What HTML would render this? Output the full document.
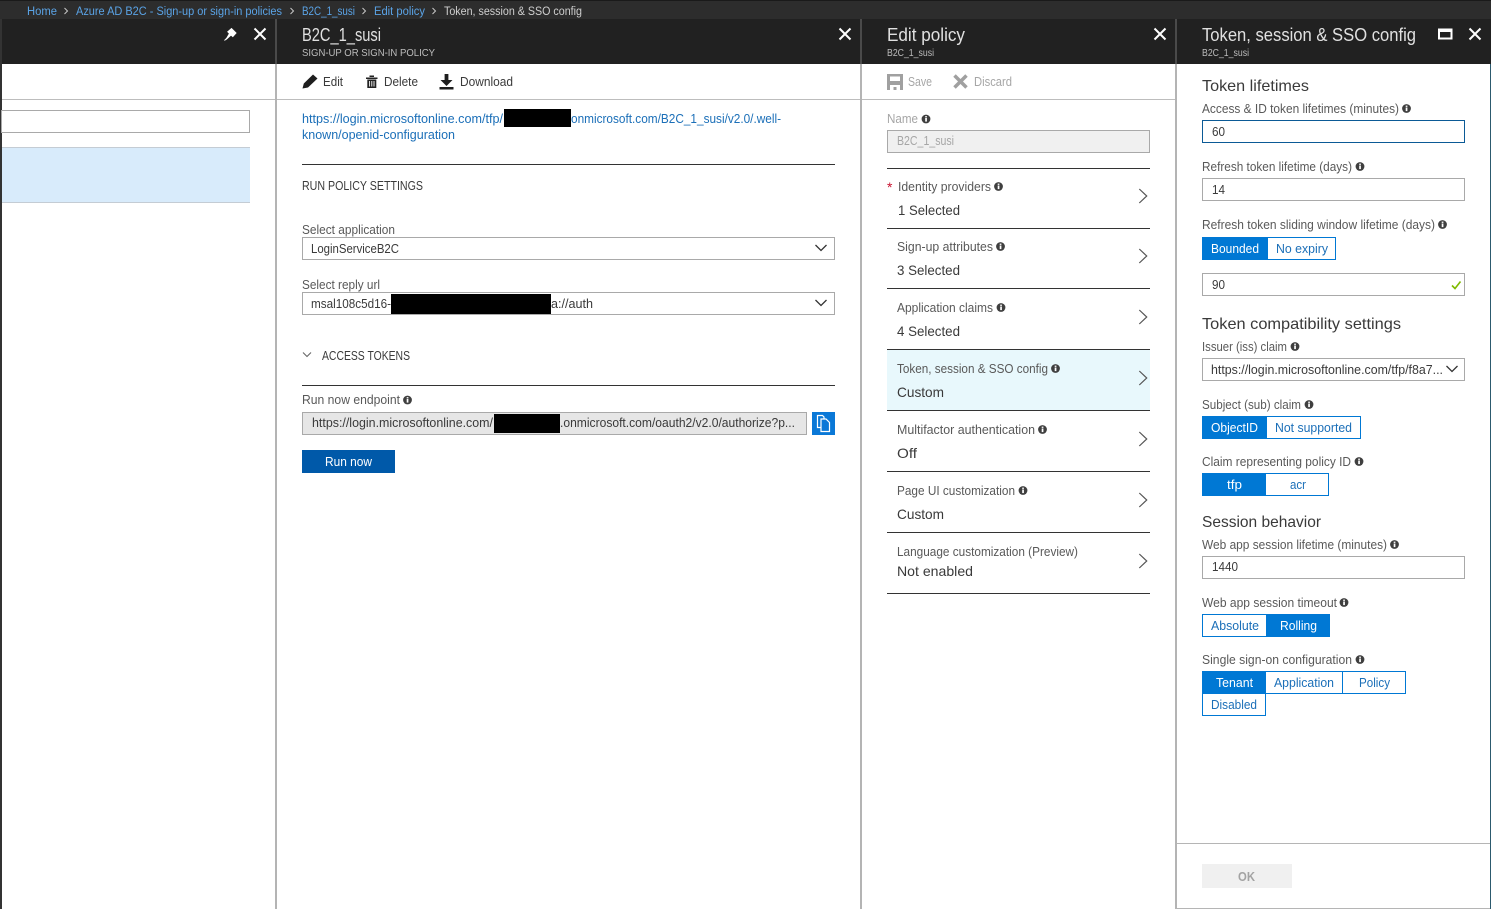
<!DOCTYPE html>
<html><head><meta charset="utf-8"><title>Token, session &amp; SSO config</title>
<style>
html,body{margin:0;padding:0;background:#fff;overflow:hidden}
svg{display:block;position:absolute;left:0;top:0}
text{font-family:"Liberation Sans",sans-serif;font-size:12.5px;fill:#595959}
.l{fill:#1b6fb8}.d{fill:#3a3a3a}.w{fill:#fff}.g{fill:#a6a6a6}
.t{font-size:18px;fill:#e0e0e0}.s{font-size:10px;fill:#bdbdbd}
.bc{font-size:11.5px;fill:#5aa3e6}
.h{font-size:16px;fill:#3a3a3a}.v{font-size:14px;fill:#3a3a3a}
.box{fill:#fff;stroke:#a9a9a9;stroke-width:1}
.tb{fill:#fff;stroke:#0078d4;stroke-width:1}
.on{fill:#0078d4}
.x{fill:none;stroke:#fff;stroke-width:2}
</style></head><body>
<svg width="1491" height="909" viewBox="0 0 1491 909" xmlns="http://www.w3.org/2000/svg">
<defs>
<g id="i"><circle cx="0" cy="0" r="4.4" fill="#3f3f3f"/><rect x="-.8" y="-1" width="1.7" height="3.6" fill="#fff"/><rect x="-.8" y="-2.9" width="1.7" height="1.3" fill="#fff"/></g>
<path id="chev" d="M-3.7 -7 L3.7 0 L-3.7 7" fill="none" stroke="#555" stroke-width="1.2"/>
<path id="dd" d="M-5.5 -3 L0 2.5 L5.5 -3" fill="none" stroke="#333" stroke-width="1.3"/>
<path id="cl" d="M-5.5 -5.5 L5.5 5.5 M5.5 -5.5 L-5.5 5.5" class="x"/>
<path id="bcc" d="M-1.5 -3 L1.5 0 L-1.5 3" fill="none" stroke="#c8c8c8" stroke-width="1"/>
</defs>

<!-- top bars -->
<rect x="0" y="0" width="1491" height="19" fill="#2d2d2d"/>
<rect x="0" y="0" width="1491" height="1" fill="#1a1a1a"/>
<rect x="0" y="19" width="1491" height="45" fill="#212121"/>
<text class="bc" x="27" y="15" textLength="30" lengthAdjust="spacingAndGlyphs">Home</text>
<use href="#bcc" x="66" y="11"/>
<text class="bc" x="76" y="15" textLength="206" lengthAdjust="spacingAndGlyphs">Azure AD B2C - Sign-up or sign-in policies</text>
<use href="#bcc" x="292" y="11"/>
<text class="bc" x="302" y="15" textLength="53" lengthAdjust="spacingAndGlyphs">B2C_1_susi</text>
<use href="#bcc" x="364" y="11"/>
<text class="bc" x="374" y="15" textLength="51" lengthAdjust="spacingAndGlyphs">Edit policy</text>
<use href="#bcc" x="434" y="11"/>
<text class="bc" style="fill:#cfcfcf" x="444" y="15" textLength="138" lengthAdjust="spacingAndGlyphs">Token, session &amp; SSO config</text>

<!-- panel frames -->
<rect x="0" y="19" width="2" height="890" fill="#333"/>
<rect x="275" y="19" width="2" height="45" fill="#4a4a4a"/>
<rect x="860" y="19" width="2" height="45" fill="#4a4a4a"/>
<rect x="1175" y="19" width="2" height="45" fill="#4a4a4a"/>
<rect x="275" y="64" width="2" height="845" fill="#b4b4b4"/>
<rect x="860" y="64" width="2" height="845" fill="#b4b4b4"/>
<rect x="1175" y="64" width="2" height="845" fill="#b4b4b4"/>
<rect x="1490" y="64" width="1" height="845" fill="#2c5a6e"/>
<rect x="2" y="99" width="273" height="1" fill="#bdbdbd"/>
<rect x="277" y="99" width="583" height="1" fill="#bdbdbd"/>
<rect x="862" y="99" width="313" height="1" fill="#bdbdbd"/>
<rect x="1177" y="843" width="313" height="1" fill="#b5b5b5"/>
<rect x="1177" y="908" width="313" height="1" fill="#b5b5b5"/>

<!-- header content -->
<path d="M226 39.5 L229.5 33.5 L227.8 31.8 L231.5 28.5 L236 33 L232.8 36.6 L231 35 Z M229.5 35.5 L224.5 40.5" fill="#fff" stroke="#fff" stroke-width="1"/>
<use href="#cl" x="260" y="34"/>
<use href="#cl" x="845" y="34"/>
<use href="#cl" x="1160" y="34"/>
<use href="#cl" x="1475" y="34"/>
<rect x="1439" y="29.5" width="12.5" height="9" fill="none" stroke="#fff" stroke-width="2"/><rect x="1438" y="29" width="14" height="3" fill="#fff"/>
<text class="t" x="302" y="41" textLength="79" lengthAdjust="spacingAndGlyphs">B2C_1_susi</text>
<text class="s" x="302" y="56" textLength="133" lengthAdjust="spacingAndGlyphs">SIGN-UP OR SIGN-IN POLICY</text>
<text class="t" x="887" y="41" textLength="78" lengthAdjust="spacingAndGlyphs">Edit policy</text>
<text class="s" x="887" y="56" textLength="47" lengthAdjust="spacingAndGlyphs">B2C_1_susi</text>
<text class="t" x="1202" y="41" textLength="214" lengthAdjust="spacingAndGlyphs">Token, session &amp; SSO config</text>
<text class="s" x="1202" y="56" textLength="47" lengthAdjust="spacingAndGlyphs">B2C_1_susi</text>

<!-- left panel -->
<rect x="1.5" y="110.5" width="248" height="22" class="box"/>
<rect x="2" y="148" width="248" height="55" fill="#d8ebfb"/>
<rect x="2" y="147" width="248" height="1" fill="#c4ccd4"/>
<rect x="2" y="202" width="248" height="1" fill="#c4ccd4"/>

<!-- panel 2 toolbar -->
<path d="M302.5 88.5 L303.8 83.5 L313 74.5 L317.5 78.5 L308 87.5 Z" fill="#1e1e1e"/>
<text class="d" x="323" y="86" textLength="20" lengthAdjust="spacingAndGlyphs">Edit</text>
<path d="M366 77.5 H377.5 V79 H366 Z M369.5 75.5 H374 V77 H369.5 Z M367.3 79.5 H376.3 V88 H367.3 Z" fill="#222"/>
<path d="M369.6 81 V86.5 M371.8 81 V86.5 M374 81 V86.5" stroke="#fff" stroke-width=".9"/>
<text class="d" x="384" y="86" textLength="34" lengthAdjust="spacingAndGlyphs">Delete</text>
<path d="M444.6 74 H448.4 V80 H452.5 L446.5 86 L440.5 80 H444.6 Z" fill="#1e1e1e"/><rect x="439.5" y="87" width="14" height="2.5" fill="#1e1e1e"/>
<text class="d" x="460" y="86" textLength="53" lengthAdjust="spacingAndGlyphs">Download</text>

<!-- panel 2 body -->
<text class="l" x="302" y="123" textLength="201" lengthAdjust="spacingAndGlyphs">https://login.microsoftonline.com/tfp/</text>
<rect x="504" y="109" width="67" height="18" fill="#000"/>
<text class="l" x="571" y="123" textLength="210" lengthAdjust="spacingAndGlyphs">onmicrosoft.com/B2C_1_susi/v2.0/.well-</text>
<text class="l" x="302" y="139" textLength="153" lengthAdjust="spacingAndGlyphs">known/openid-configuration</text>
<rect x="302" y="164" width="533" height="1" fill="#333"/>
<text class="d" x="302" y="190" textLength="121" lengthAdjust="spacingAndGlyphs">RUN POLICY SETTINGS</text>
<text x="302" y="234" textLength="93" lengthAdjust="spacingAndGlyphs">Select application</text>
<rect x="302.5" y="237.5" width="532" height="22" class="box"/>
<text class="d" x="311" y="253" textLength="88" lengthAdjust="spacingAndGlyphs">LoginServiceB2C</text>
<use href="#dd" x="821" y="248"/>
<text x="302" y="289" textLength="78" lengthAdjust="spacingAndGlyphs">Select reply url</text>
<rect x="302.5" y="292.5" width="532" height="22" class="box"/>
<text class="d" x="311" y="308" textLength="80" lengthAdjust="spacingAndGlyphs">msal108c5d16-</text>
<rect x="391" y="294" width="160" height="20" fill="#000"/>
<text class="d" x="551" y="308" textLength="42" lengthAdjust="spacingAndGlyphs">a://auth</text>
<use href="#dd" x="821" y="303"/>
<path d="M303 352.5 L307 356.5 L311 352.5" fill="none" stroke="#666" stroke-width="1.1"/>
<text class="d" x="322" y="360" textLength="88" lengthAdjust="spacingAndGlyphs">ACCESS TOKENS</text>
<rect x="302" y="385" width="533" height="1" fill="#333"/>
<text x="302" y="404" textLength="98" lengthAdjust="spacingAndGlyphs">Run now endpoint</text>
<use href="#i" x="407.500" y="400"/>
<rect x="302.500" y="412.500" width="504" height="22" fill="#e6e6e6" stroke="#a9a9a9"/>
<text class="d" x="312" y="427" textLength="181" lengthAdjust="spacingAndGlyphs">https://login.microsoftonline.com/</text>
<rect x="494" y="414" width="66" height="19" fill="#000"/>
<text class="d" x="560" y="427" textLength="235" lengthAdjust="spacingAndGlyphs">.onmicrosoft.com/oauth2/v2.0/authorize?p...</text>
<rect x="812" y="412" width="23" height="23" fill="#0a78d7"/>
<path d="M817.500 415.500 H822.500 L824 417 V427.500 H817.500 Z" fill="none" stroke="#fff" stroke-width="1.2"/>
<path d="M821 419 H826 L829.500 422.500 V431.500 H821 Z" fill="#0a78d7" stroke="#fff" stroke-width="1.2"/>
<rect x="302" y="450" width="93" height="23" fill="#0059a9"/>
<text class="w" x="325" y="466" textLength="47" lengthAdjust="spacingAndGlyphs">Run now</text>

<!-- panel 3 toolbar -->
<path d="M887 74 H903 V90 H900 V85 H890 V90 H887 Z M890 76.500 V81 H900 V76.500 Z M893.500 87 H896.500 V90 H893.500 Z" fill="#a0a0a0" fill-rule="evenodd"/>
<text class="g" x="908" y="86" textLength="24" lengthAdjust="spacingAndGlyphs">Save</text>
<path d="M954.500 75.500 L966.500 87.500 M966.500 75.500 L954.500 87.500" stroke="#a0a0a0" stroke-width="3.500" fill="none"/>
<text class="g" x="974" y="86" textLength="38" lengthAdjust="spacingAndGlyphs">Discard</text>

<!-- panel 3 body -->
<text class="g" x="887" y="123" textLength="31" lengthAdjust="spacingAndGlyphs">Name</text>
<use href="#i" x="926" y="119"/>
<rect x="887.500" y="130.500" width="262" height="22" fill="#f0f0f0" stroke="#a9a9a9"/>
<text class="g" x="897" y="145" textLength="57" lengthAdjust="spacingAndGlyphs">B2C_1_susi</text>
<rect x="887" y="168" width="263" height="1" fill="#333"/>

<text style="fill:#c8102e;font-size:14px" x="887" y="192">*</text>
<text x="898" y="191" textLength="93" lengthAdjust="spacingAndGlyphs">Identity providers</text>
<use href="#i" x="998.500" y="186.500"/>
<text class="v" x="898" y="215" textLength="62" lengthAdjust="spacingAndGlyphs">1 Selected</text>
<use href="#chev" x="1143" y="196"/>
<rect x="887" y="228" width="263" height="1" fill="#333"/>

<text x="897" y="251" textLength="96" lengthAdjust="spacingAndGlyphs">Sign-up attributes</text>
<use href="#i" x="1000.500" y="246.500"/>
<text class="v" x="897" y="275" textLength="63" lengthAdjust="spacingAndGlyphs">3 Selected</text>
<use href="#chev" x="1143" y="256"/>
<rect x="887" y="288" width="263" height="1" fill="#333"/>

<text x="897" y="312" textLength="96" lengthAdjust="spacingAndGlyphs">Application claims</text>
<use href="#i" x="1001" y="307.500"/>
<text class="v" x="897" y="336" textLength="63" lengthAdjust="spacingAndGlyphs">4 Selected</text>
<use href="#chev" x="1143" y="317"/>
<rect x="887" y="349" width="263" height="1" fill="#333"/>

<rect x="887" y="350" width="263" height="60" fill="#e8f8fc"/>
<text x="897" y="373" textLength="151" lengthAdjust="spacingAndGlyphs">Token, session &amp; SSO config</text>
<use href="#i" x="1055.500" y="368.500"/>
<text class="v" x="897" y="397" textLength="47" lengthAdjust="spacingAndGlyphs">Custom</text>
<use href="#chev" x="1143" y="378"/>
<rect x="887" y="410" width="263" height="1" fill="#333"/>

<text x="897" y="434" textLength="138" lengthAdjust="spacingAndGlyphs">Multifactor authentication</text>
<use href="#i" x="1042.500" y="429.500"/>
<text class="v" x="897" y="458" textLength="20" lengthAdjust="spacingAndGlyphs">Off</text>
<use href="#chev" x="1143" y="439"/>
<rect x="887" y="471" width="263" height="1" fill="#333"/>

<text x="897" y="495" textLength="118" lengthAdjust="spacingAndGlyphs">Page UI customization</text>
<use href="#i" x="1023" y="490.500"/>
<text class="v" x="897" y="519" textLength="47" lengthAdjust="spacingAndGlyphs">Custom</text>
<use href="#chev" x="1143" y="500"/>
<rect x="887" y="532" width="263" height="1" fill="#333"/>

<text x="897" y="556" textLength="181" lengthAdjust="spacingAndGlyphs">Language customization (Preview)</text>
<text class="v" x="897" y="576" textLength="76" lengthAdjust="spacingAndGlyphs">Not enabled</text>
<use href="#chev" x="1143" y="561"/>
<rect x="887" y="593" width="263" height="1" fill="#333"/>

<!-- panel 4 body -->
<text class="h" x="1202" y="91" textLength="107" lengthAdjust="spacingAndGlyphs">Token lifetimes</text>
<text x="1202" y="113" textLength="197" lengthAdjust="spacingAndGlyphs">Access &amp; ID token lifetimes (minutes)</text>
<use href="#i" x="1406.500" y="108.500"/>
<rect x="1202.500" y="120.500" width="262" height="22" fill="#fff" stroke="#0b5a96"/>
<text class="d" x="1212" y="136" textLength="13" lengthAdjust="spacingAndGlyphs">60</text>

<text x="1202" y="171" textLength="150" lengthAdjust="spacingAndGlyphs">Refresh token lifetime (days)</text>
<use href="#i" x="1360" y="166.500"/>
<rect x="1202.500" y="178.500" width="262" height="22" class="box"/>
<text class="d" x="1212" y="194" textLength="13" lengthAdjust="spacingAndGlyphs">14</text>

<text x="1202" y="229" textLength="233" lengthAdjust="spacingAndGlyphs">Refresh token sliding window lifetime (days)</text>
<use href="#i" x="1442.500" y="224.500"/>
<rect x="1267.500" y="237.500" width="68" height="22" class="tb"/>
<rect x="1202" y="237" width="65" height="23" class="on"/>
<text class="w" x="1211" y="253" textLength="48" lengthAdjust="spacingAndGlyphs">Bounded</text>
<text class="l" x="1276" y="253" textLength="52" lengthAdjust="spacingAndGlyphs">No expiry</text>

<rect x="1202.500" y="273.500" width="262" height="22" class="box"/>
<text class="d" x="1212" y="289" textLength="13" lengthAdjust="spacingAndGlyphs">90</text>
<path d="M1452 285.500 L1455 288.500 L1460.500 281.500" fill="none" stroke="#7fba00" stroke-width="1.6"/>

<text class="h" x="1202" y="329" textLength="199" lengthAdjust="spacingAndGlyphs">Token compatibility settings</text>
<text x="1202" y="351" textLength="85" lengthAdjust="spacingAndGlyphs">Issuer (iss) claim</text>
<use href="#i" x="1295" y="346.500"/>
<rect x="1202.500" y="358.500" width="262" height="22" class="box"/>
<text class="d" x="1211" y="374" textLength="232" lengthAdjust="spacingAndGlyphs">https://login.microsoftonline.com/tfp/f8a7...</text>
<use href="#dd" x="1452" y="369"/>

<text x="1202" y="409" textLength="99" lengthAdjust="spacingAndGlyphs">Subject (sub) claim</text>
<use href="#i" x="1309" y="404.500"/>
<rect x="1266.500" y="416.500" width="94" height="22" class="tb"/>
<rect x="1202" y="416" width="64" height="23" class="on"/>
<text class="w" x="1211" y="432" textLength="47" lengthAdjust="spacingAndGlyphs">ObjectID</text>
<text class="l" x="1275" y="432" textLength="77" lengthAdjust="spacingAndGlyphs">Not supported</text>

<text x="1202" y="466" textLength="149" lengthAdjust="spacingAndGlyphs">Claim representing policy ID</text>
<use href="#i" x="1359" y="461.500"/>
<rect x="1265.500" y="473.500" width="63" height="22" class="tb"/>
<rect x="1202" y="473" width="64" height="23" class="on"/>
<text class="w" x="1227" y="489" textLength="15" lengthAdjust="spacingAndGlyphs">tfp</text>
<text class="l" x="1290" y="489" textLength="16" lengthAdjust="spacingAndGlyphs">acr</text>

<text class="h" x="1202" y="527" textLength="119" lengthAdjust="spacingAndGlyphs">Session behavior</text>
<text x="1202" y="549" textLength="185" lengthAdjust="spacingAndGlyphs">Web app session lifetime (minutes)</text>
<use href="#i" x="1394.500" y="544.500"/>
<rect x="1202.500" y="556.500" width="262" height="22" class="box"/>
<text class="d" x="1212" y="571" textLength="26" lengthAdjust="spacingAndGlyphs">1440</text>

<text x="1202" y="607" textLength="135" lengthAdjust="spacingAndGlyphs">Web app session timeout</text>
<use href="#i" x="1344" y="602.500"/>
<rect x="1202.500" y="614.500" width="64" height="22" class="tb"/>
<rect x="1266" y="614" width="64" height="23" class="on"/>
<text class="l" x="1211" y="630" textLength="48" lengthAdjust="spacingAndGlyphs">Absolute</text>
<text class="w" x="1280" y="630" textLength="37" lengthAdjust="spacingAndGlyphs">Rolling</text>

<text x="1202" y="664" textLength="150" lengthAdjust="spacingAndGlyphs">Single sign-on configuration</text>
<use href="#i" x="1360" y="659.500"/>
<rect x="1265.500" y="671.500" width="77" height="22" class="tb"/>
<rect x="1342.500" y="671.500" width="63" height="22" class="tb"/>
<rect x="1202" y="671" width="64" height="23" class="on"/>
<text class="w" x="1216" y="687" textLength="37" lengthAdjust="spacingAndGlyphs">Tenant</text>
<text class="l" x="1274" y="687" textLength="60" lengthAdjust="spacingAndGlyphs">Application</text>
<text class="l" x="1359" y="687" textLength="31" lengthAdjust="spacingAndGlyphs">Policy</text>
<rect x="1202.500" y="693.500" width="63" height="22" class="tb"/>
<text class="l" x="1211" y="709" textLength="46" lengthAdjust="spacingAndGlyphs">Disabled</text>

<rect x="1202" y="864" width="90" height="24" fill="#f0f0f0"/>
<text style="fill:#a3a3a3;font-weight:bold" x="1238" y="881" textLength="17" lengthAdjust="spacingAndGlyphs">OK</text>
</svg>
</body></html>
